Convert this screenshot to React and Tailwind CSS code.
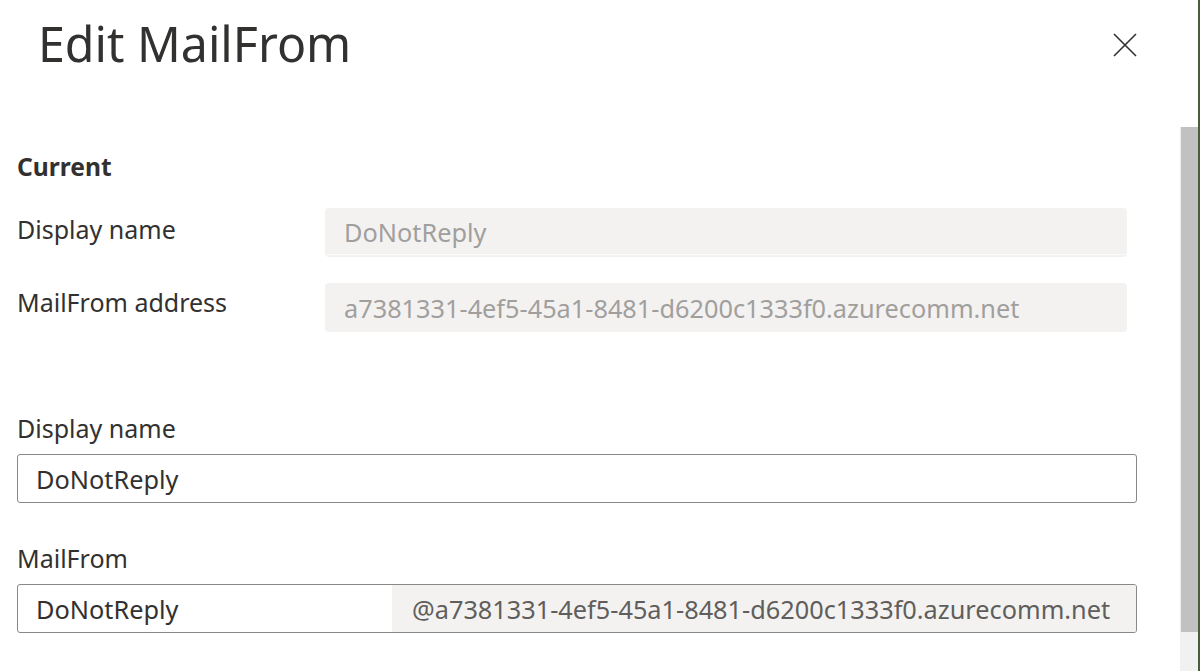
import React from "react";

const font = { fontFamily: '"Noto Sans", "Open Sans", sans-serif' };

function ReadOnly({ children, underline }) {
  return (
    <div className="flex h-[49px] w-[802px] flex-col overflow-hidden rounded-[4px] bg-[#f3f2f1]">
      <div className="flex flex-1 items-center pl-[19px] pt-[3px] text-[25.3px] text-[#a19f9d]">{children}</div>
      {underline ? <div className="mb-[2px] h-[1px] bg-[#fbfbfb]" /> : null}
    </div>
  );
}

export default function App() {
  return (
    <div className="flex h-[671px] w-[1200px] overflow-hidden bg-white text-[#323130]" style={font}>
      <div className="flex flex-1 flex-col">
        <div className="flex h-[94px] items-start justify-between">
          <h1 className="ml-[38px] mt-[10px] text-[48.3px] leading-[66px] font-normal text-[#323130]">Edit MailFrom</h1>
          <button className="mr-[43px] mt-[33px] h-[24px] w-[24px] text-[#323130]">
            <svg viewBox="0 0 24 24" width="24" height="24" fill="none" stroke="currentColor" strokeWidth="1.6">
              <path d="M1 1 L23 23 M23 1 L1 23" />
            </svg>
          </button>
        </div>
        <div className="pl-[17px]">
          <div className="mt-[58px] text-[24.6px] font-bold leading-[30px]">Current</div>
          <div className="mt-[26px] flex items-start">
            <div className="w-[308px] pt-[5px] text-[25px] leading-[32px]">Display name</div>
            <ReadOnly underline>DoNotReply</ReadOnly>
          </div>
          <div className="mt-[26px] flex items-start">
            <div className="w-[308px] pt-[3px] text-[25px] leading-[32px]">MailFrom address</div>
            <ReadOnly>a7381331-4ef5-45a1-8481-d6200c1333f0.azurecomm.net</ReadOnly>
          </div>
          <div className="mt-[80px] text-[25px] leading-[32px]">Display name</div>
          <div className="mt-[10px] flex h-[49px] w-[1120px] items-center rounded-[3px] border border-[#8a8886] pl-[18px] pt-[2px] text-[25.3px]">
            DoNotReply
          </div>
          <div className="mt-[39px] text-[25px] leading-[32px]">MailFrom</div>
          <div className="mt-[10px] flex h-[49px] w-[1120px] overflow-hidden rounded-[3px] border border-[#8a8886] text-[25.3px]">
            <div className="flex w-[374px] items-center pl-[18px] pt-[2px]">DoNotReply</div>
            <div className="flex flex-1 items-center bg-[#f3f2f1] pl-[20px] pt-[2px] text-[#605e5c]">@a7381331-4ef5-45a1-8481-d6200c1333f0.azurecomm.net</div>
          </div>
        </div>
      </div>
      <div className="flex w-[18px] flex-col">
        <div className="h-[127px] bg-white" />
        <div className="h-[505px] border-l border-[#ececec] bg-[#c1c1c1]" />
        <div className="flex-1 bg-[#f1f1f1]" />
      </div>
      <div className="w-[2px] bg-[#4c5b3c]" />
    </div>
  );
}
